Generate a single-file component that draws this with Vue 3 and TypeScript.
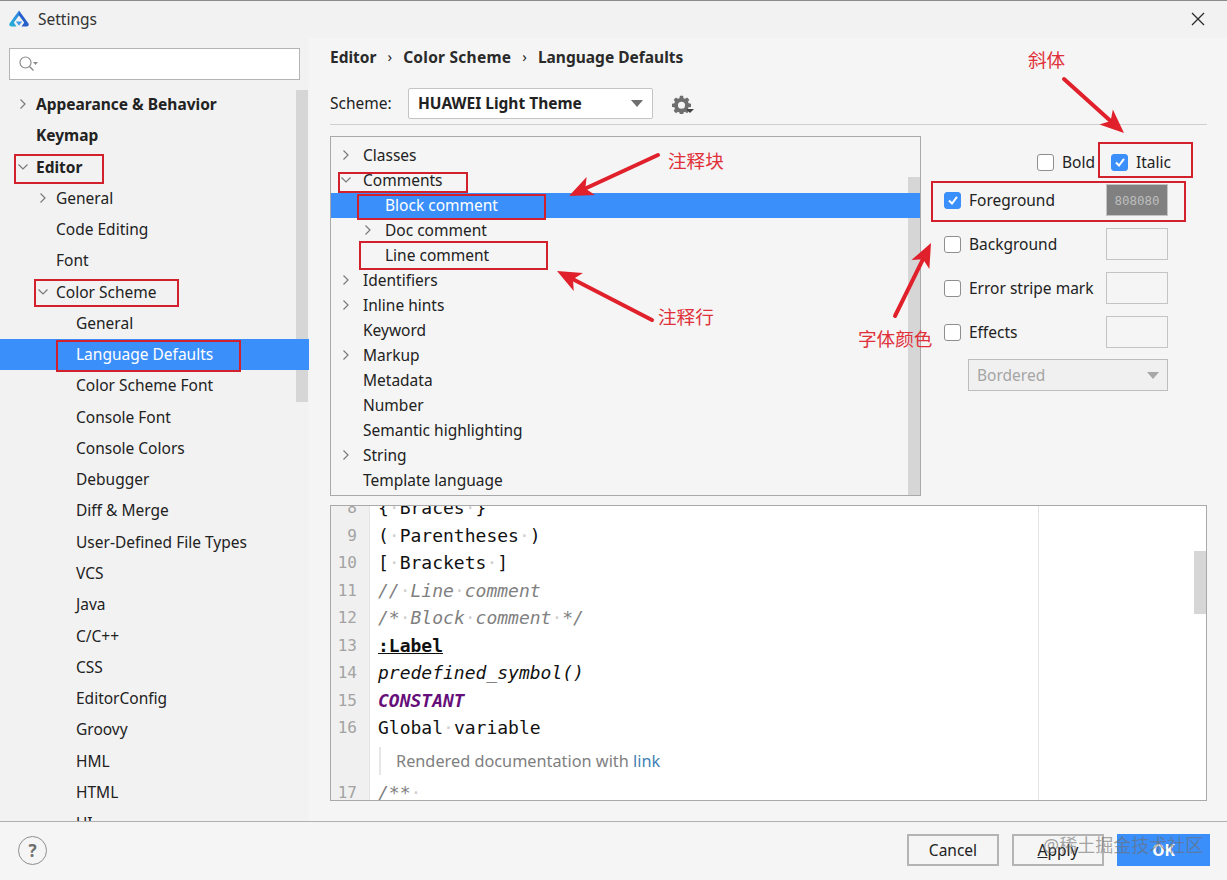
<script setup lang="ts">
interface SideRow {
  label: string;
  level: number;
  bold?: boolean;
  arrow?: "right" | "down";
  selected?: boolean;
}
interface ListRow {
  label: string;
  level: number;
  arrow?: "right" | "down";
  selected?: boolean;
}
interface AttrRow {
  label: string;
  checked?: boolean;
  value?: string;
}

const sideRows: SideRow[] = [
  { label: "Appearance & Behavior", level: 0, bold: true, arrow: "right" },
  { label: "Keymap", level: 0, bold: true },
  { label: "Editor", level: 0, bold: true, arrow: "down" },
  { label: "General", level: 1, arrow: "right" },
  { label: "Code Editing", level: 1 },
  { label: "Font", level: 1 },
  { label: "Color Scheme", level: 1, arrow: "down" },
  { label: "General", level: 2 },
  { label: "Language Defaults", level: 2, selected: true },
  { label: "Color Scheme Font", level: 2 },
  { label: "Console Font", level: 2 },
  { label: "Console Colors", level: 2 },
  { label: "Debugger", level: 2 },
  { label: "Diff & Merge", level: 2 },
  { label: "User-Defined File Types", level: 2 },
  { label: "VCS", level: 2 },
  { label: "Java", level: 2 },
  { label: "C/C++", level: 2 },
  { label: "CSS", level: 2 },
  { label: "EditorConfig", level: 2 },
  { label: "Groovy", level: 2 },
  { label: "HML", level: 2 },
  { label: "HTML", level: 2 },
  { label: "UI", level: 2 },
];

const listRows: ListRow[] = [
  { label: "Classes", level: 0, arrow: "right" },
  { label: "Comments", level: 0, arrow: "down" },
  { label: "Block comment", level: 1, selected: true },
  { label: "Doc comment", level: 1, arrow: "right" },
  { label: "Line comment", level: 1 },
  { label: "Identifiers", level: 0, arrow: "right" },
  { label: "Inline hints", level: 0, arrow: "right" },
  { label: "Keyword", level: 0 },
  { label: "Markup", level: 0, arrow: "right" },
  { label: "Metadata", level: 0 },
  { label: "Number", level: 0 },
  { label: "Semantic highlighting", level: 0 },
  { label: "String", level: 0, arrow: "right" },
  { label: "Template language", level: 0 },
];

const attrRows: AttrRow[] = [
  { label: "Foreground", checked: true, value: "808080" },
  { label: "Background" },
  { label: "Error stripe mark" },
  { label: "Effects" },
];

const boxes = [
  { x: 15, y: 155, w: 88, h: 28 },
  { x: 35, y: 280, w: 143, h: 26 },
  { x: 57, y: 341, w: 183, h: 30 },
  { x: 339, y: 173, w: 128, h: 19 },
  { x: 358, y: 195, w: 187, h: 24 },
  { x: 360, y: 242, w: 187, h: 27 },
  { x: 1099, y: 143, w: 93, h: 34 },
  { x: 932, y: 182, w: 253, h: 39 },
];

// tail and tip of each red arrow; the head is worked out from the direction
const arrows = [
  [1064, 79, 1124, 133],
  [658, 155, 569, 196],
  [652, 320, 557, 271],
  [895, 316, 931, 243],
].map(([x1, y1, x2, y2]) => {
  const len = Math.hypot(x2 - x1, y2 - y1);
  const ux = (x2 - x1) / len;
  const uy = (y2 - y1) / len;
  const nx = -uy;
  const ny = ux;
  const baseX = x2 - ux * 24;
  const baseY = y2 - uy * 24;
  const neckX = x2 - ux * 18;
  const neckY = y2 - uy * 18;
  return {
    line: { x1, y1, x2: neckX, y2: neckY },
    head: [
      [x2, y2],
      [baseX + nx * 10, baseY + ny * 10],
      [neckX, neckY],
      [baseX - nx * 10, baseY - ny * 10],
    ]
      .map((p) => p.join(","))
      .join(" "),
  };
});
</script>

<template>
  <div class="window">
    <header class="titlebar">
      <svg class="logo" viewBox="0 0 20 17" width="20" height="17" aria-hidden="true">
        <defs>
          <linearGradient id="logo-left" x1="0" y1="1" x2="0.6" y2="0">
            <stop offset="0" stop-color="#25b4d6" />
            <stop offset="1" stop-color="#2f86e0" />
          </linearGradient>
        </defs>
        <path d="M10 0.5 L19.500 13.500 Q20.500 16.500 17.500 16.500 L12.500 16.500 L15.200 12.500 L10 5.500 Z" fill="#2660c8" />
        <path d="M10 0.5 L0.5 13.500 Q-0.500 16.500 2.500 16.500 L7.500 16.500 L4.800 12.500 L10 5.500 Z" fill="url(#logo-left)" />
        <path d="M6.800 11.500 L13.200 11.500 L10 15.800 Z" fill="#3f9ae8" />
      </svg>
      <span class="title">Settings</span>
      <svg class="close" viewBox="0 0 14 14" width="14" height="14" aria-hidden="true">
        <path d="M1 1 L13 13 M13 1 L1 13" stroke="#2b2b2b" stroke-width="1.3" fill="none" />
      </svg>
    </header>

    <div class="body">
      <aside class="sidebar">
        <div class="search">
          <svg viewBox="0 0 22 18" width="22" height="18" aria-hidden="true">
            <circle cx="7.500" cy="7.500" r="5.500" fill="none" stroke="#8c8c8c" stroke-width="1.2" />
            <path d="M11.500 11.500 L15.500 15.500" stroke="#8c8c8c" stroke-width="1.5" />
            <path d="M15 7 L20 7 L17.500 10 Z" fill="#8c8c8c" />
          </svg>
        </div>
        <div class="side-tree">
          <div class="side-scroll"></div>
          <div
            v-for="(row, i) in sideRows"
            :key="i"
            :class="['side-row', 'lv' + row.level, { selected: row.selected, bold: row.bold }]"
          >
            <svg v-if="row.arrow" class="chev" viewBox="0 0 10 10" width="10" height="10" aria-hidden="true">
              <path v-if="row.arrow === 'right'" d="M2.500 0.5 L7 5 L2.500 9.500" />
              <path v-else d="M0.5 2.500 L5 7 L9.500 2.500" />
            </svg>
            <span>{{ row.label }}</span>
          </div>
        </div>
      </aside>

      <main class="main">
        <nav class="crumbs">
          <span>Editor</span>
          <i class="sep">›</i>
          <span>Color Scheme</span>
          <i class="sep">›</i>
          <span>Language Defaults</span>
        </nav>

        <div class="scheme">
          <span class="scheme-label">Scheme:</span>
          <div class="scheme-combo">
            <b>HUAWEI Light Theme</b>
            <span class="tri"></span>
          </div>
          <svg class="gear" viewBox="0 0 24 24" width="19" height="19" aria-hidden="true">
            <path
              fill="#6e6e6e"
              fill-rule="evenodd"
              d="M10 1h4l.6 3 1.900.8L19 3.100 21.900 6l-1.700 2.500.8 1.900 3 .6v4l-3 .6-.8 1.900 1.700 2.500L19 22.900l-2.500-1.700-1.900.8-.6 3h-4l-.6-3-1.900-.8L5 22.900 2.100 20l1.700-2.500-.8-1.900-3-.6v-4l3-.6.8-1.900L2.100 6 5 3.100l2.500 1.700 1.900-.8zM12 8.500a4.500 4.500 0 1 0 0 9 4.500 4.500 0 0 0 0-9z"
            />
          </svg>
          <span class="gear-tri"></span>
        </div>

        <div class="rule"></div>

        <div class="panels">
          <div class="list">
            <div class="list-scroll"></div>
            <div
              v-for="(row, i) in listRows"
              :key="i"
              :class="['list-row', 'lv' + row.level, { selected: row.selected }]"
            >
              <svg v-if="row.arrow" class="chev" viewBox="0 0 10 10" width="10" height="10" aria-hidden="true">
                <path v-if="row.arrow === 'right'" d="M2.500 0.5 L7 5 L2.500 9.500" />
                <path v-else d="M0.5 2.500 L5 7 L9.500 2.500" />
              </svg>
              <span>{{ row.label }}</span>
            </div>
          </div>

          <div class="attrs">
            <div class="styles">
              <span class="check"></span>
              <span class="style-label">Bold</span>
              <span class="check on">
                <svg viewBox="0 0 12 12" width="12" height="12" aria-hidden="true"><path d="M2 6.500 L5 9.500 L10 2.800" /></svg>
              </span>
              <span class="style-label">Italic</span>
            </div>
            <div v-for="row in attrRows" :key="row.label" class="attr">
              <span :class="['check', { on: row.checked }]">
                <svg v-if="row.checked" viewBox="0 0 12 12" width="12" height="12" aria-hidden="true"><path d="M2 6.500 L5 9.500 L10 2.800" /></svg>
              </span>
              <span class="attr-label">{{ row.label }}</span>
              <span :class="['swatch', { filled: row.value }]">{{ row.value }}</span>
            </div>
            <div class="effect-combo">
              <span>Bordered</span>
              <span class="tri light"></span>
            </div>
          </div>
        </div>

        <div class="editor">
          <div class="gutter">
            <span>8</span><span>9</span><span>10</span><span>11</span><span>12</span>
            <span>13</span><span>14</span><span>15</span><span>16</span>
            <span class="blank"></span>
            <span>17</span>
          </div>
          <div class="code">
            <div>{<i class="ws">·</i>Braces<i class="ws">·</i>}</div>
            <div>(<i class="ws">·</i>Parentheses<i class="ws">·</i>)</div>
            <div>[<i class="ws">·</i>Brackets<i class="ws">·</i>]</div>
            <div class="cmt">//<i class="ws">·</i>Line<i class="ws">·</i>comment</div>
            <div class="cmt">/*<i class="ws">·</i>Block<i class="ws">·</i>comment<i class="ws">·</i>*/</div>
            <div class="lbl">:Label</div>
            <div class="pre">predefined_symbol()</div>
            <div class="cst">CONSTANT</div>
            <div>Global<i class="ws">·</i>variable</div>
            <div class="doc">Rendered documentation with <a>link</a></div>
            <div class="cmt">/**<i class="ws">·</i></div>
          </div>
          <div class="margin-line"></div>
          <div class="code-scroll"></div>
        </div>
      </main>
    </div>

    <footer class="footer">
      <span class="help">?</span>
      <div class="buttons">
        <button class="btn">Cancel</button>
        <button class="btn"><u>A</u>pply</button>
        <button class="btn ok">OK</button>
      </div>
    </footer>

    <!-- red markup drawn over the screenshot -->
    <svg class="marks" viewBox="0 0 1227 880" width="1227" height="880" aria-hidden="true">
      <rect
        v-for="(b, i) in boxes"
        :key="i"
        :x="b.x"
        :y="b.y"
        :width="b.w"
        :height="b.h"
        fill="none"
        stroke="#d2202c"
        stroke-width="2"
      />
      <g v-for="(a, i) in arrows" :key="'a' + i">
        <line v-bind="a.line" stroke="#e0202a" stroke-width="4" stroke-linecap="round" />
        <polygon :points="a.head" fill="#e0202a" />
      </g>
    </svg>
    <span class="note n1">斜体</span>
    <span class="note n2">注释块</span>
    <span class="note n3">注释行</span>
    <span class="note n4">字体颜色</span>
    <span class="watermark">@稀土掘金技术社区</span>
  </div>
</template>

<style scoped>
.window {
  position: relative;
  width: 1227px;
  height: 880px;
  display: flex;
  flex-direction: column;
  overflow: hidden;
  background: #f5f5f5;
  border-top: 1px solid #8a8a8a;
  box-sizing: border-box;
  color: #222;
  font-family: "Noto Sans", "Open Sans", "Noto Sans CJK SC", sans-serif;
  font-size: 15.5px;
}
.titlebar {
  height: 37px;
  flex: none;
  display: flex;
  align-items: center;
  padding: 0 22px 2px 9px;
  box-sizing: border-box;
  background: #f2f2f2;
}
.title {
  margin-left: 9px;
  color: #333;
}
.close {
  margin-left: auto;
}
.body {
  flex: 1;
  min-height: 0;
  display: flex;
}
.sidebar {
  width: 309px;
  flex: none;
  display: flex;
  flex-direction: column;
  background: #f2f2f2;
  padding-top: 10px;
  box-sizing: border-box;
}
.search {
  margin-left: 9px;
  width: 291px;
  height: 32px;
  flex: none;
  box-sizing: border-box;
  background: #fff;
  border: 1px solid #b4b4b4;
  display: flex;
  align-items: center;
  padding-left: 8px;
}
.side-tree {
  position: relative;
  flex: 1;
  min-height: 0;
  overflow: hidden;
  padding-top: 8.4px;
}
.side-row {
  position: relative;
  height: 31.28px;
  display: flex;
  align-items: center;
  white-space: nowrap;
}
.side-row.lv0 {
  padding-left: 36px;
}
.side-row.lv1 {
  padding-left: 56px;
}
.side-row.lv2 {
  padding-left: 76px;
}
.side-row.bold {
  font-weight: 700;
}
.side-row.selected {
  background: #3b8ffa;
  color: #fff;
}
.chev {
  position: absolute;
  top: 50%;
  margin-top: -5px;
  fill: none;
  stroke: #7a7a7a;
  stroke-width: 1.2;
}
.side-row.lv0 .chev {
  left: 18px;
}
.side-row.lv1 .chev {
  left: 38px;
}
.side-scroll {
  position: absolute;
  right: 1px;
  top: 10px;
  width: 12px;
  height: 312px;
  background: #d6d6d6;
}
.main {
  flex: 1;
  min-width: 0;
  display: flex;
  flex-direction: column;
  padding: 0 20px 20px 21px;
  box-sizing: border-box;
}
.crumbs {
  height: 38px;
  flex: none;
  display: flex;
  align-items: center;
  gap: 11px;
  font-weight: 700;
  color: #2a2a2a;
}
.crumbs span:nth-child(3) {
  letter-spacing: 0.25px;
}
.crumbs .sep {
  font-style: normal;
  font-weight: 400;
  font-size: 15px;
  margin-top: -3px;
}
.scheme {
  height: 30px;
  flex: none;
  margin-top: 12px;
  display: flex;
  align-items: center;
  position: relative;
}
.scheme-label {
  width: 78px;
}
.scheme-combo {
  width: 245px;
  height: 31px;
  box-sizing: border-box;
  background: #fff;
  border: 1px solid #c4c4c4;
  border-radius: 2px;
  display: flex;
  align-items: center;
  padding: 0 9px;
  justify-content: space-between;
}
.tri {
  width: 0;
  height: 0;
  border-left: 6px solid transparent;
  border-right: 6px solid transparent;
  border-top: 7px solid #6f6f6f;
}
.tri.light {
  border-top-color: #a8a8a8;
}
.gear {
  margin: 3px 0 0 19px;
}
.gear-tri {
  width: 0;
  height: 0;
  margin: 16px 0 0 -5px;
  border-left: 4px solid transparent;
  border-right: 4px solid transparent;
  border-top: 4px solid #444;
}
.rule {
  height: 1px;
  flex: none;
  margin-top: 6px;
  background: #cfcfcf;
}
.panels {
  flex: none;
  display: flex;
  margin-top: 11px;
  height: 360px;
}
.list {
  position: relative;
  width: 591px;
  box-sizing: border-box;
  flex: none;
  overflow: hidden;
  border: 1px solid #a9a9a9;
  padding-top: 5.5px;
  background: #f5f5f5;
}
.list-row {
  position: relative;
  height: 25px;
  display: flex;
  align-items: center;
  white-space: nowrap;
}
.list-row.lv0 {
  padding-left: 32px;
}
.list-row.lv1 {
  padding-left: 54px;
}
.list-row.selected {
  background: #3b8ffa;
  color: #fff;
}
.list-row.lv0 .chev {
  left: 10px;
}
.list-row.lv1 .chev {
  left: 32px;
}
.list-scroll {
  position: absolute;
  right: 0;
  top: 40px;
  bottom: 0;
  width: 12px;
  background: #d6d6d6;
}
.attrs {
  flex: 1;
  min-width: 0;
  padding: 0 39px 0 23px;
  display: flex;
  flex-direction: column;
}
.styles {
  height: 42px;
  flex: none;
  box-sizing: border-box;
  padding-top: 10px;
  margin-right: -3px;
  display: flex;
  align-items: center;
  justify-content: flex-end;
}
.style-label {
  margin-left: 8px;
}
.style-label:nth-child(2) {
  margin-right: 16px;
}
.check {
  width: 17px;
  height: 17px;
  flex: none;
  box-sizing: border-box;
  background: #fff;
  border: 1px solid #8e8e8e;
  border-radius: 3px;
  display: flex;
  align-items: center;
  justify-content: center;
}
.check.on {
  background: #3b8ffa;
  border-color: #3b8ffa;
}
.check svg {
  fill: none;
  stroke: #fff;
  stroke-width: 2;
}
.attr {
  height: 44px;
  flex: none;
  display: flex;
  align-items: center;
}
.attr-label {
  margin-left: 8px;
  flex: 1;
}
.swatch {
  width: 62px;
  height: 32px;
  box-sizing: border-box;
  border: 1px solid #c4c4c4;
  display: flex;
  align-items: center;
  justify-content: center;
  font-family: "DejaVu Sans Mono", monospace;
  font-size: 12.5px;
  color: #bdbdbd;
}
.swatch.filled {
  background: #808080;
}
.effect-combo {
  margin: 5px 0 0 24px;
  height: 32px;
  box-sizing: border-box;
  border: 1px solid #bdbdbd;
  display: flex;
  align-items: center;
  justify-content: space-between;
  padding: 0 8px;
  color: #a5a5a5;
  background: #f0f0f0;
}
.editor {
  position: relative;
  flex: 1;
  min-height: 0;
  margin-top: 9px;
  display: flex;
  overflow: hidden;
  background: #fff;
  border: 1px solid #a9a9a9;
  font-family: "DejaVu Sans Mono", monospace;
  font-size: 18px;
  line-height: 27.5px;
}
.gutter {
  width: 39px;
  height: 320px;
  flex: none;
  margin-top: -12px;
  display: flex;
  flex-direction: column;
  align-items: flex-end;
  padding-right: 12px;
  box-sizing: border-box;
  color: #a3a3a3;
  background: #f0f0f0;
  font-size: 16px;
  border-right: 1px solid #e4e4e4;
}
.gutter span {
  height: 27.5px;
  flex: none;
}
.gutter .blank {
  height: 37.5px;
}
.code {
  margin-top: -12px;
  padding-left: 8px;
  color: #111;
  white-space: pre;
}
.ws {
  font-style: normal;
  font-weight: 400;
  color: #d0d0d0;
}
.cmt {
  color: #808080;
  font-style: italic;
}
.lbl {
  font-weight: 700;
  text-decoration: underline;
}
.pre {
  font-style: italic;
}
.cst {
  color: #660e7a;
  font-weight: 700;
  font-style: italic;
}
.doc {
  height: 28px;
  margin: 5px 0 4.5px 1px;
  padding-left: 15px;
  border-left: 2px solid #e6e6e6;
  box-sizing: border-box;
  font-family: "Noto Sans", sans-serif;
  font-size: 16.3px;
  line-height: 28px;
  color: #808080;
}
.doc a {
  color: #3f7fb5;
}
.margin-line {
  position: absolute;
  left: 707px;
  top: 0;
  bottom: 0;
  width: 1px;
  background: #e4e4e4;
}
.code-scroll {
  position: absolute;
  right: 0;
  top: 45px;
  width: 12px;
  height: 63px;
  background: #d6d6d6;
}
.footer {
  height: 59px;
  flex: none;
  box-sizing: border-box;
  border-top: 1px solid #b0b0b0;
  display: flex;
  align-items: center;
  padding: 0 17px 2px 18px;
}
.help {
  width: 29px;
  height: 29px;
  box-sizing: border-box;
  border: 1px solid #8e8e8e;
  border-radius: 50%;
  display: flex;
  align-items: center;
  justify-content: center;
  font-weight: 700;
  font-size: 17px;
  color: #6e6e6e;
}
.buttons {
  margin-left: auto;
  display: flex;
  gap: 13px;
}
.btn {
  width: 92px;
  height: 32px;
  padding: 0;
  box-sizing: border-box;
  border: 2px solid #b4b4b4;
  background: #f5f5f5;
  font: inherit;
  color: #222;
}
.btn.ok {
  width: 93px;
  background: #3b8ffa;
  border-color: #3b8ffa;
  color: #fff;
  font-weight: 700;
}
.marks {
  position: absolute;
  left: 0;
  top: -1px;
  pointer-events: none;
}
.note {
  position: absolute;
  font-size: 18.6px;
  line-height: 24px;
  color: #e0303a;
  white-space: nowrap;
}
.n1 {
  left: 1028px;
  top: 47px;
}
.n2 {
  left: 668px;
  top: 148px;
}
.n3 {
  left: 658px;
  top: 304px;
}
.n4 {
  left: 858px;
  top: 326px;
}
.watermark {
  position: absolute;
  left: 1043px;
  top: 832px;
  font-size: 18px;
  line-height: 24px;
  color: rgba(110, 110, 110, 0.62);
  white-space: nowrap;
}
</style>
